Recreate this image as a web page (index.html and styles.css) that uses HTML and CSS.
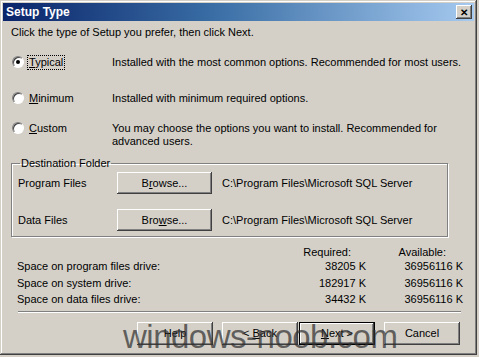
FILE: index.html
```html
<!DOCTYPE html>
<html lang="en">
<head>
  <meta charset="UTF-8" />
  <title>Setup Type</title>
  <link rel="stylesheet" href="styles.css">
</head>
<body>
  <div class="window">
    <div class="titlebar">
      <span class="title">Setup Type</span>
      <span class="close">&#x2715;</span>
    </div>

    <div class="content">
      <p class="intro">Click the type of Setup you prefer, then click Next.</p>

      <!-- Setup type options -->
      <div class="options">
        <div class="option typical">
          <span class="radio checked"></span>
          <span class="label focus"><u>T</u>ypical</span>
          <span class="desc">Installed with the most common options. Recommended for most users.</span>
        </div>
        <div class="option minimum">
          <span class="radio"></span>
          <span class="label"><u>M</u>inimum</span>
          <span class="desc">Installed with minimum required options.</span>
        </div>
        <div class="option custom">
          <span class="radio"></span>
          <span class="label"><u>C</u>ustom</span>
          <span class="desc">You may choose the options you want to install. Recommended for advanced users.</span>
        </div>
      </div>

      <!-- Destination folder -->
      <fieldset class="group">
        <legend>Destination Folder</legend>
        <div class="folder-row">
          <span class="folder-name">Program Files</span>
          <button class="btn browse">B<u>r</u>owse...</button>
          <span class="path">C:\Program Files\Microsoft SQL Server</span>
        </div>
        <div class="folder-row">
          <span class="folder-name">Data Files</span>
          <button class="btn browse">Bro<u>w</u>se...</button>
          <span class="path">C:\Program Files\Microsoft SQL Server</span>
        </div>
      </fieldset>

      <!-- Disk space -->
      <div class="space">
        <span></span><span class="head req">Required:</span><span class="head avail">Available:</span>
        <span>Space on program files drive:</span><span class="num">38205 K</span><span class="num">36956116 K</span>
        <span>Space on system drive:</span><span class="num">182917 K</span><span class="num">36956116 K</span>
        <span>Space on data files drive:</span><span class="num">34432 K</span><span class="num">36956116 K</span>
      </div>

      <div class="separator"></div>

      <div class="buttons">
        <button class="btn">Help</button>
        <div class="pair">
          <button class="btn">&lt; <u>B</u>ack</button>
          <button class="btn default"><u>N</u>ext &gt;</button>
        </div>
        <button class="btn">Cancel</button>
      </div>
    </div>

    <div class="watermark">windows-noob.com</div>
  </div>
</body>
</html>
```

FILE: styles.css
```css
* {
  box-sizing: border-box;
}

body {
  margin: 0;
  font-family: "Liberation Sans", Arial, sans-serif;
  font-size: 11px;
  color: #000;
  background: #d4d0c8;
}

.window {
  position: relative;
  width: 477px;
  height: 355px;
  padding: 3px;
  background: #d4d0c8;
  box-shadow: inset -1px -1px #404040, inset 1px 1px #d4d0c8,
              inset -2px -2px #808080, inset 2px 2px #fff;
  overflow: hidden;
}

.titlebar {
  display: flex;
  align-items: center;
  justify-content: space-between;
  height: 18px;
  padding: 0 2px 0 3px;
  background: linear-gradient(to right, #0a246a, #3a6ea5 45%, #a6caf0);
}

.title {
  color: #fff;
  font-weight: bold;
  font-size: 12px;
}

.close {
  width: 16px;
  height: 14px;
  display: flex;
  align-items: center;
  justify-content: center;
  font-size: 10px;
  font-weight: bold;
  background: #d4d0c8;
  box-shadow: inset -1px -1px #404040, inset 1px 1px #fff, inset -2px -2px #808080;
}

.content {
  padding: 0 0 0 8px;
}

.intro {
  margin: 5px 0 0;
  line-height: 13px;
}

.options {
  margin-top: 17px;
}

.option {
  display: grid;
  grid-template-columns: 17px 84px 356px;
  align-items: start;
  line-height: 13px;
}

.minimum {
  margin-top: 23px;
}

.custom {
  margin-top: 17px;
}

.radio {
  width: 12px;
  height: 12px;
  margin: 0 0 0 1px;
  border-radius: 50%;
  background: #fff;
  border: 1px solid;
  border-color: #808080 #fff #fff #808080;
  box-shadow: inset 1px 1px #404040;
  position: relative;
}

.radio.checked::after {
  content: "";
  position: absolute;
  left: 3px;
  top: 3px;
  width: 4px;
  height: 4px;
  border-radius: 50%;
  background: #000;
}

.label {
  justify-self: start;
  padding: 0 1px;
}

.label.focus {
  outline: 1px dotted #000;
}

.group {
  margin: 10px 0 0 0;
  width: 437px;
  height: 79px;
  padding: 0 0 0 6px;
  border: 1px solid #808080;
  box-shadow: 1px 1px #fff, inset 1px 1px #fff;
}

.group legend {
  padding: 0 1px;
  margin-left: 2px;
  line-height: 11px;
}

.folder-row {
  display: grid;
  grid-template-columns: 89px 95px 1fr;
  align-items: center;
  column-gap: 10px;
  margin-top: 3px;
}

.folder-row + .folder-row {
  margin-top: 15px;
}

.btn {
  height: 22px;
  padding: 0;
  border: none;
  font-family: inherit;
  font-size: 11px;
  color: #000;
  background: #d4d0c8;
  box-shadow: inset -1px -1px #404040, inset 1px 1px #fff, inset -2px -2px #808080;
}

.space {
  display: grid;
  grid-template-columns: 279px 70px 97px;
  margin: 9px 0 0 6px;
  line-height: 16.5px;
}

.space .head {
  line-height: 12px;
}

.req {
  text-align: right;
  padding-right: 15px;
}

.avail {
  text-align: right;
  padding-right: 17px;
}

.num {
  text-align: right;
}

.separator {
  margin: 3px 0 0 7px;
  width: 443px;
  height: 2px;
  border-top: 1px solid #808080;
  border-bottom: 1px solid #fff;
}

.buttons {
  display: flex;
  gap: 9px;
  margin: 9px 0 0 126px;
}

.buttons .btn {
  width: 76px;
  height: 23px;
}

.pair {
  display: flex;
  gap: 1px;
}

.btn.default {
  outline: 1px solid #000;
  outline-offset: -1px;
  box-shadow: inset -2px -2px #404040, inset 2px 2px #fff, inset -3px -3px #808080;
}

.watermark {
  position: absolute;
  left: 123px;
  top: 318px;
  font-family: "Liberation Sans", Arial, sans-serif;
  font-size: 33px;
  letter-spacing: -0.5px;
  color: rgba(50, 50, 50, 0.72);
  line-height: 38px;
}
```
